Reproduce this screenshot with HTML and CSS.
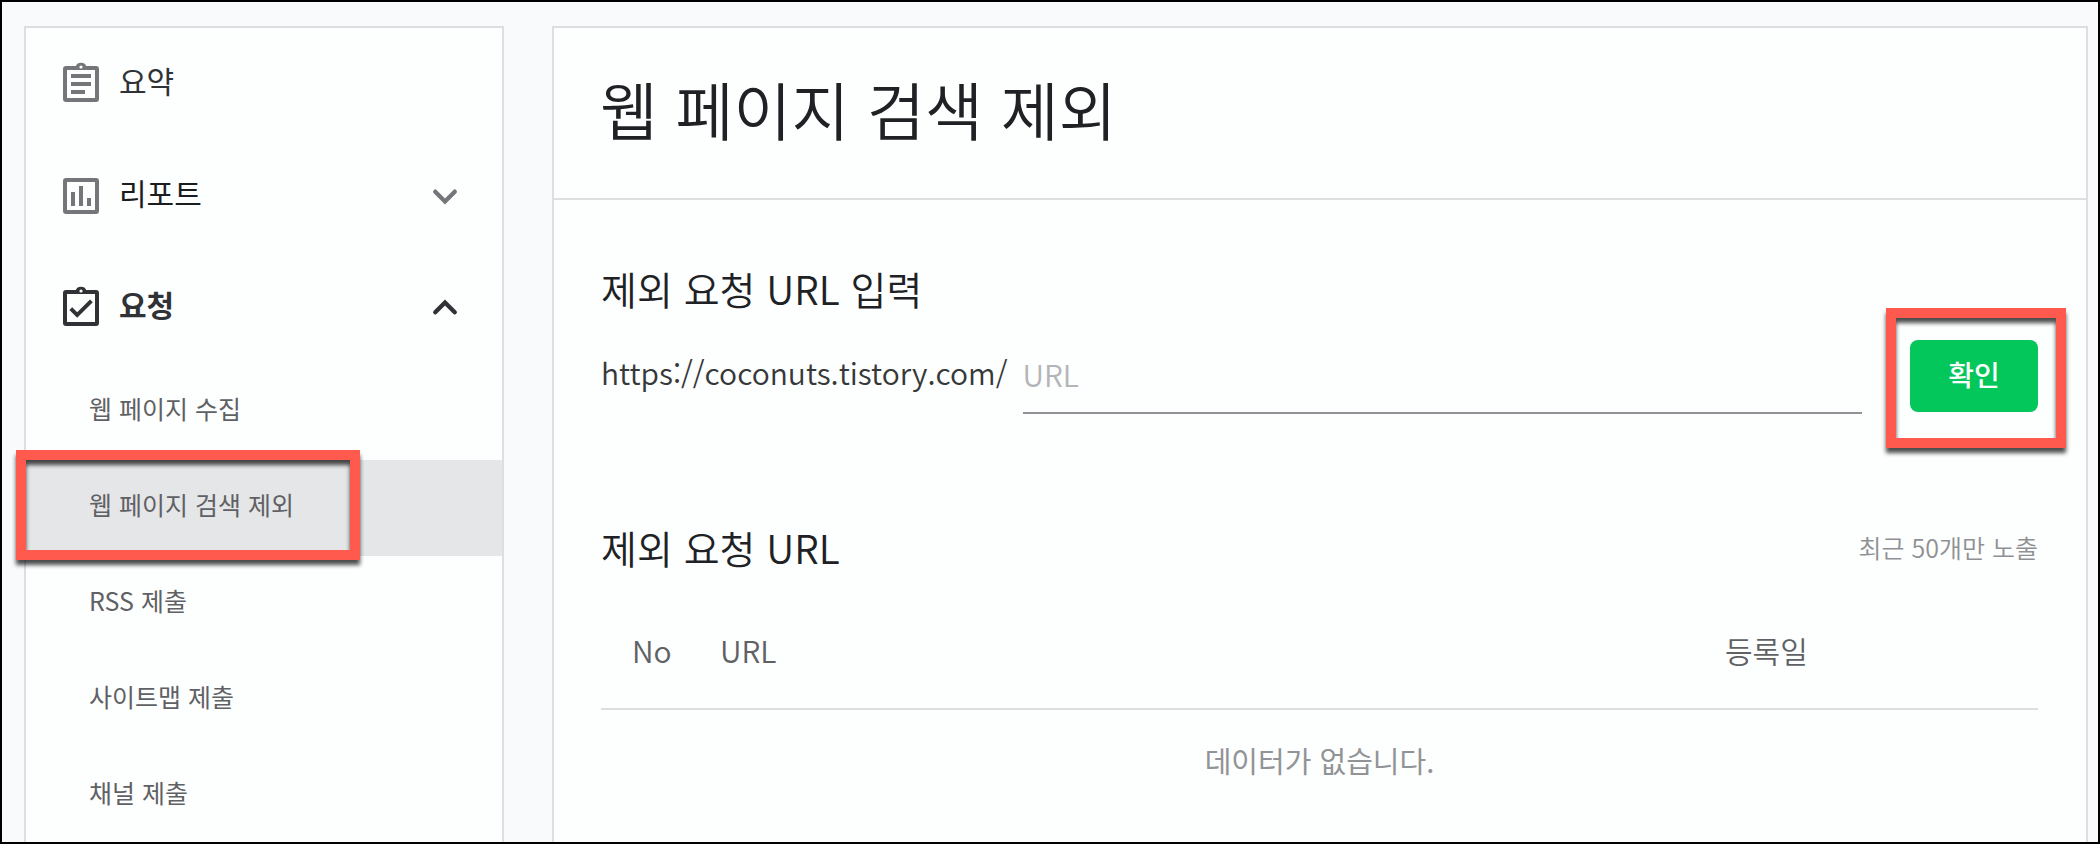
FILE: index.html
```html
<!DOCTYPE html>
<html lang="ko">
<head>
<meta charset="utf-8">
<title>웹 페이지 검색 제외</title>
<link rel="stylesheet" href="styles.css">
</head>
<body>
<div class="page">
  <nav class="sidebar">
    <a class="menu" href="#">
      <svg class="menu-icon" viewBox="0 0 24 24" fill="currentColor"><path fill-rule="evenodd" d="M4.500 3h4.900a2.700 2.300 0 0 1 5.200 0h4.900A1.500 1.500 0 0 1 21 4.500v15a1.500 1.500 0 0 1-1.500 1.500h-15A1.500 1.500 0 0 1 3 19.500v-15A1.500 1.500 0 0 1 4.500 3zM5 5v14h14V5zM12 2.700a.8.8 0 1 0 0 1.600.8.8 0 0 0 0-1.600z"/><path d="M7 7h10v2H7zM7 11h10v2H7zM7 15h7v2H7z"/></svg>
      <span class="menu-label">요약</span>
    </a>
    <button class="menu menu-report" type="button" aria-expanded="false">
      <svg class="menu-icon" viewBox="0 0 24 24" fill="currentColor"><path fill-rule="evenodd" d="M4.500 3h15A1.500 1.500 0 0 1 21 4.500v15a1.500 1.500 0 0 1-1.500 1.500h-15A1.500 1.500 0 0 1 3 19.500v-15A1.500 1.500 0 0 1 4.500 3zM5 5v14h14V5z"/><path d="M7 10h2v7H7zM11 7h2v10h-2zM15 13h2v4h-2z"/></svg>
      <span class="menu-label">리포트</span>
      <svg class="chevron" viewBox="0 0 24 24"><path d="M3 8l9 9 9-9"/></svg>
    </button>
    <button class="menu menu-open" type="button" aria-expanded="true">
      <svg class="menu-icon" viewBox="0 0 24 24" fill="currentColor"><path fill-rule="evenodd" d="M4.500 3h4.900a2.700 2.300 0 0 1 5.200 0h4.900A1.500 1.500 0 0 1 21 4.500v15a1.500 1.500 0 0 1-1.500 1.500h-15A1.500 1.500 0 0 1 3 19.500v-15A1.500 1.500 0 0 1 4.500 3zM5 5v14h14V5zM12 2.700a.8.8 0 1 0 0 1.600.8.8 0 0 0 0-1.600z"/><path d="M6.200 13l1.400-1.400 2.500 2.500 6.400-6.400L17.900 9.100 10.100 16.900z"/></svg>
      <span class="menu-label">요청</span>
      <svg class="chevron" viewBox="0 0 24 24"><path d="M3 16l9-9 9 9"/></svg>
    </button>
    <ul class="submenu">
      <li><a class="sub" href="#">웹 페이지 수집</a></li>
      <li><a class="sub sub-active" href="#">웹 페이지 검색 제외</a></li>
      <li><a class="sub" href="#">RSS 제출</a></li>
      <li><a class="sub" href="#">사이트맵 제출</a></li>
      <li><a class="sub" href="#">채널 제출</a></li>
    </ul>
  </nav>
  <main class="panel">
    <header class="panel-head"><h1 class="title">웹 페이지 검색 제외</h1></header>
    <div class="panel-body">
      <h2 class="heading">제외 요청 URL 입력</h2>
      <form class="url-form">
        <label class="url-prefix" for="url">https://coconuts.tistory.com/</label>
        <input class="url-input" id="url" type="text" placeholder="URL">
        <div class="submit-wrap"><button class="submit" type="button">확인</button></div>
      </form>
      <div class="list-head">
        <h2 class="heading">제외 요청 URL</h2>
        <span class="note">최근 50개만 노출</span>
      </div>
      <table class="list">
        <thead><tr><th class="col-no">No</th><th>URL</th><th class="col-date">등록일</th></tr></thead>
        <tbody><tr><td class="empty" colspan="3">데이터가 없습니다.</td></tr></tbody>
      </table>
    </div>
  </main>
</div>
</body>
</html>
```

FILE: styles.css
```css
*,
*::after { box-sizing: border-box; }

body {
  margin: 0;
  font-family: "Noto Sans CJK KR", sans-serif;
  color: #202124;
}

.page {
  display: flex;
  gap: 48px;
  height: 100vh;
  overflow: hidden;
  padding: 24px 10px 0 22px;
  border: 2px solid #000;
  background: #f9fafc;
}

.sidebar,
.panel {
  height: 100vh;
  border: 2px solid #dcdee0;
  background: #fdfefe;
}

.sidebar { flex: 0 0 480px; }

.panel { flex: 1; min-width: 0; }

.menu {
  display: flex;
  align-items: center;
  gap: 14px;
  width: 100%;
  height: 112px;
  padding: 0 44px 0 31px;
  border: 0;
  background: none;
  font: 400 30px/44px "Noto Sans CJK KR", sans-serif;
  color: #757679;
  text-align: left;
  text-decoration: none;
}

.menu-icon { width: 48px; height: 48px; }

.menu-label { flex: 1; padding-bottom: 8px; color: #303236; }

.menu-report .menu-label { color: #1b1c1e; }

.menu-open { color: #303236; font-weight: 700; }

.chevron {
  width: 26px;
  height: 26px;
  fill: none;
  stroke: currentColor;
  stroke-width: 4;
  stroke-linecap: round;
}

.submenu { margin: 0; padding: 0; list-style: none; }

.sub {
  position: relative;
  display: flex;
  align-items: center;
  height: 96px;
  padding: 0 0 8px 63px;
  font-size: 25px;
  color: #5f6164;
  text-decoration: none;
}

.sub-active { background: #e5e6e8; }

.sub-active::after,
.submit-wrap::after {
  content: "";
  position: absolute;
  border: 10px solid #ff5a4d;
  filter: drop-shadow(0 5px 2px rgba(0, 0, 0, 0.7));
  pointer-events: none;
}

.sub-active::after { top: -10px; bottom: -4px; left: -10px; width: 344px; }

.panel-head {
  display: flex;
  align-items: center;
  height: 172px;
  padding: 0 46px 10px;
  border-bottom: 2px solid #dcdee0;
}

.title { margin: 0; font-size: 63px; font-weight: 350; line-height: 96px; }

.panel-body { padding: 56px 48px 0 47px; }

.heading { margin: 0; font-size: 39px; font-weight: 350; line-height: 64px; }

.url-form {
  display: flex;
  align-items: flex-start;
  margin-top: 20px;
}

.url-prefix {
  font-size: 30px;
  font-weight: 350;
  line-height: 64px;
  color: #36383a;
}

.url-input {
  flex: 1;
  min-width: 0;
  height: 74px;
  margin: 0 48px 0 15px;
  padding: 0 0 4px;
  border: 0;
  border-bottom: 2px solid #929396;
  outline: 0;
  background: none;
  font: 350 30px "Noto Sans CJK KR", sans-serif;
  color: #424446;
}

.url-input::placeholder { color: #b4b5b8; opacity: 1; }

.submit-wrap { position: relative; }

.submit-wrap::after { top: -32px; right: -28px; bottom: -36px; left: -24px; }

.submit {
  display: block;
  width: 128px;
  height: 72px;
  padding: 0 0 4px;
  border: 0;
  border-radius: 8px;
  background: #03c75a;
  font: 500 28px "Noto Sans CJK KR", sans-serif;
  color: #fff;
}

.list-head {
  display: flex;
  align-items: center;
  justify-content: space-between;
  margin-top: 101px;
}

.note { font-size: 25px; font-weight: 350; color: #8f9093; }

.list {
  width: 100%;
  margin-top: 16px;
  border-collapse: collapse;
  table-layout: fixed;
  font-size: 30px;
  line-height: 44px;
}

.list th {
  height: 114px;
  padding: 0 0 4px 31px;
  border-bottom: 2px solid #dcdee0;
  font-weight: 350;
  color: #5f6164;
  text-align: left;
}

.col-no { width: 88px; }

.col-date { width: 344px; }

.empty {
  height: 104px;
  padding: 0 0 4px;
  font-size: 29px;
  color: #929396;
  text-align: center;
}
```
